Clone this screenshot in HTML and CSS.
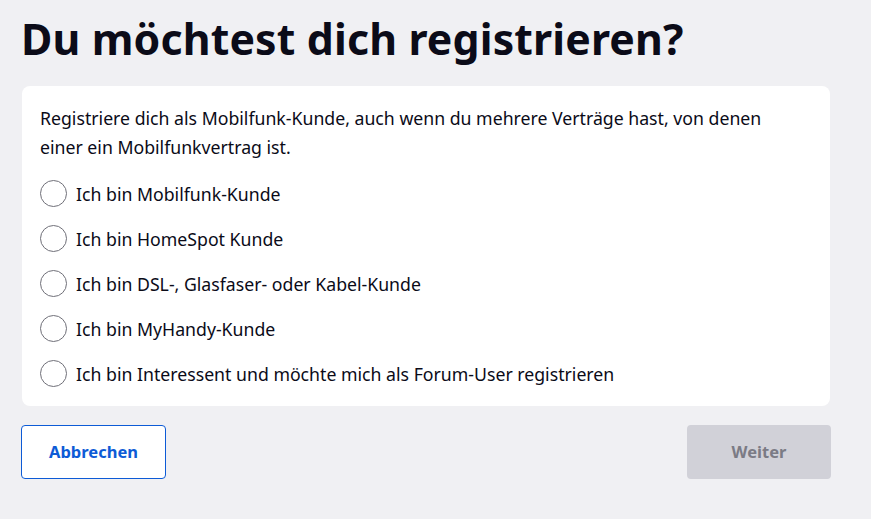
FILE: index.html
```html
<!DOCTYPE html>
<html lang="de">
<head>
<meta charset="utf-8">
<link rel="stylesheet" href="styles.css">
</head>
<body>
<main class="page">
  <h1 class="title">Du möchtest dich registrieren?</h1>
  <section class="card">
    <p class="intro">Registriere dich als Mobilfunk-Kunde, auch wenn du mehrere Verträge hast, von denen einer ein Mobilfunkvertrag ist.</p>
    <ul class="options">
      <li class="option"><span class="radio"></span><span>Ich bin Mobilfunk-Kunde</span></li>
      <li class="option"><span class="radio"></span><span>Ich bin HomeSpot Kunde</span></li>
      <li class="option"><span class="radio"></span><span>Ich bin DSL-, Glasfaser- oder Kabel-Kunde</span></li>
      <li class="option"><span class="radio"></span><span>Ich bin MyHandy-Kunde</span></li>
      <li class="option"><span class="radio"></span><span>Ich bin Interessent und möchte mich als Forum-User registrieren</span></li>
    </ul>
  </section>
  <div class="actions">
    <button class="btn btn-secondary">Abbrechen</button>
    <button class="btn btn-disabled">Weiter</button>
  </div>
</main>
</body>
</html>
```
FILE: styles.css
```css
html, body {
  margin: 0;
  padding: 0;
  background: #f0f0f3;
}
body {
  font-family: "Noto Sans", "Open Sans", sans-serif;
  color: #0b0b18;
}
.page {
  width: 808px;
  padding: 11px 0 0 22px;
}
.title {
  margin: 0 0 19px -1px;
  font-size: 42.8px;
  line-height: 56px;
  font-weight: 700;
  letter-spacing: 0.15px;
}
.card {
  background: #ffffff;
  border-radius: 8px;
  padding: 18px 18px 10px 18px;
}
.intro {
  margin: 0 0 9px 0;
  max-width: 740px;
  font-size: 17.7px;
  line-height: 29px;
}
.options {
  list-style: none;
  margin: 0;
  padding: 0;
}
.option {
  display: flex;
  align-items: center;
  gap: 9px;
  height: 45px;
  font-size: 17.7px;
}
.radio {
  width: 25px;
  height: 25px;
  border: 1px solid #6f6f78;
  border-radius: 50%;
  background: #fff;
  flex: none;
}
.actions {
  display: flex;
  justify-content: space-between;
  margin-top: 19px;
  width: 810px;
  margin-left: -1px;
}
.btn {
  height: 54px;
  width: 145px;
  padding: 0 0 2px 0;
  border-radius: 4px;
  font-family: inherit;
  font-size: 16.5px;
  font-weight: 700;
}
.btn-secondary {
  background: #fff;
  border: 1px solid #0d5bd6;
  color: #0d5bd6;
}
.btn-disabled {
  background: #d1d1d8;
  border: none;
  color: #7b7b85;
  width: 144px;
}
```
